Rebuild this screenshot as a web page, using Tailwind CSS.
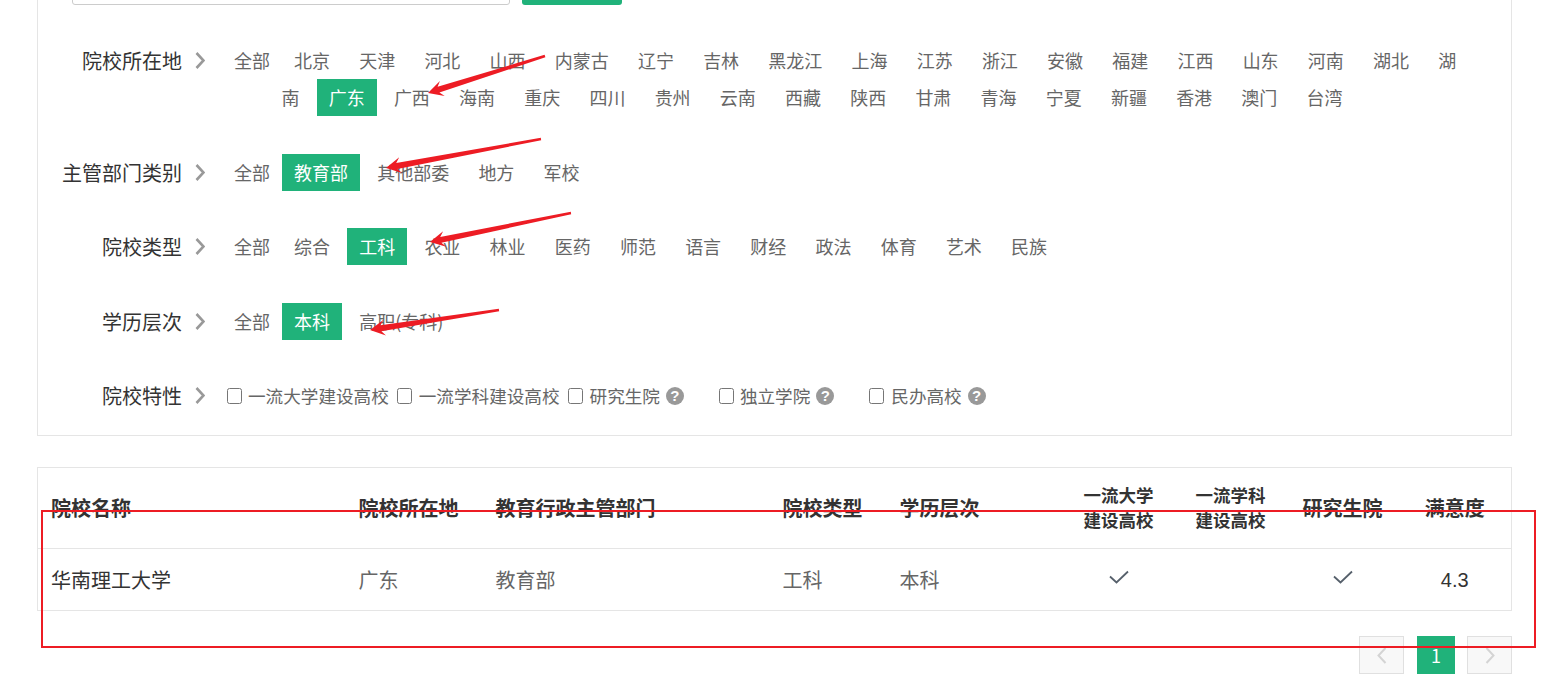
<!DOCTYPE html>
<html lang="zh-CN">
<head>
<meta charset="utf-8">
<script src="https://cdn.jsdelivr.net/npm/@tailwindcss/browser@4"></script>
</head>
<body class="relative h-[690px] w-[1566px] overflow-hidden bg-white font-['Noto_Sans_CJK_SC','Noto_Sans',sans-serif] text-[#666]">
<div class="ml-[37px] w-[1475px]">
  <section class="-mt-[40px] h-[476px] border border-[#e5e5e5] pl-[34px]">
    <div class="flex gap-[12px]">
      <div class="h-[44px] w-[438px] rounded-[3px] border border-[#ccc]"></div>
      <div class="h-[44px] w-[100px] rounded-[3px] bg-[#20b27a]"></div>
    </div>
  </section>
  <section class="-mt-[476px] h-[476px] pt-[81.5px]">
    <div class="flex h-[37px] leading-[37px] text-[18px]">
      <div class="w-[145px] shrink-0 text-right text-[20px] text-[#333] leading-[37px]">院校所在地</div>
      <div class="flex w-[40px] shrink-0 items-center pl-[13px]"><svg width="10" height="17" viewBox="0 0 10 17" fill="none" stroke="#999" stroke-width="2.6"><path d="M1.5 1l7 7.5-7 7.5"/></svg></div>
      <div class="flex"><span class="px-[12px]">全部</span>
        <div class="flex gap-[5.2px]">
          <span class="px-[12px]">北京</span><span class="px-[12px]">天津</span><span class="px-[12px]">河北</span><span class="px-[12px]">山西</span><span class="px-[12px]">内蒙古</span><span class="px-[12px]">辽宁</span><span class="px-[12px]">吉林</span><span class="px-[12px]">黑龙江</span><span class="px-[12px]">上海</span><span class="px-[12px]">江苏</span><span class="px-[12px]">浙江</span><span class="px-[12px]">安徽</span><span class="px-[12px]">福建</span><span class="px-[12px]">江西</span><span class="px-[12px]">山东</span><span class="px-[12px]">河南</span><span class="px-[12px]">湖北</span><span class="px-[12px]">湖</span>
        </div>
      </div>
    </div>
    <div class="flex h-[37px] gap-[5.2px] pl-[232.5px] leading-[37px] text-[18px]">
      <span class="px-[12px]">南</span><span class="bg-[#20b27a] px-[12px] text-white">广东</span><span class="px-[12px]">广西</span><span class="px-[12px]">海南</span><span class="px-[12px]">重庆</span><span class="px-[12px]">四川</span><span class="px-[12px]">贵州</span><span class="px-[12px]">云南</span><span class="px-[12px]">西藏</span><span class="px-[12px]">陕西</span><span class="px-[12px]">甘肃</span><span class="px-[12px]">青海</span><span class="px-[12px]">宁夏</span><span class="px-[12px]">新疆</span><span class="px-[12px]">香港</span><span class="px-[12px]">澳门</span><span class="px-[12px]">台湾</span>
    </div>
    <div class="mt-[38px] flex h-[37px] leading-[37px] text-[18px]">
      <div class="w-[145px] shrink-0 text-right text-[20px] text-[#333]">主管部门类别</div>
      <div class="flex w-[40px] shrink-0 items-center pl-[13px]"><svg width="10" height="17" viewBox="0 0 10 17" fill="none" stroke="#999" stroke-width="2.6"><path d="M1.5 1l7 7.5-7 7.5"/></svg></div>
      <div class="flex"><span class="px-[12px]">全部</span>
        <div class="flex gap-[5.2px]"><span class="bg-[#20b27a] px-[12px] text-white">教育部</span><span class="px-[12px]">其他部委</span><span class="px-[12px]">地方</span><span class="px-[12px]">军校</span></div>
      </div>
    </div>
    <div class="mt-[37.5px] flex h-[37px] leading-[37px] text-[18px]">
      <div class="w-[145px] shrink-0 text-right text-[20px] text-[#333]">院校类型</div>
      <div class="flex w-[40px] shrink-0 items-center pl-[13px]"><svg width="10" height="17" viewBox="0 0 10 17" fill="none" stroke="#999" stroke-width="2.6"><path d="M1.5 1l7 7.5-7 7.5"/></svg></div>
      <div class="flex"><span class="px-[12px]">全部</span>
        <div class="flex gap-[5.2px]"><span class="px-[12px]">综合</span><span class="bg-[#20b27a] px-[12px] text-white">工科</span><span class="px-[12px]">农业</span><span class="px-[12px]">林业</span><span class="px-[12px]">医药</span><span class="px-[12px]">师范</span><span class="px-[12px]">语言</span><span class="px-[12px]">财经</span><span class="px-[12px]">政法</span><span class="px-[12px]">体育</span><span class="px-[12px]">艺术</span><span class="px-[12px]">民族</span></div>
      </div>
    </div>
    <div class="mt-[37.5px] flex h-[37px] leading-[37px] text-[18px]">
      <div class="w-[145px] shrink-0 text-right text-[20px] text-[#333]">学历层次</div>
      <div class="flex w-[40px] shrink-0 items-center pl-[13px]"><svg width="10" height="17" viewBox="0 0 10 17" fill="none" stroke="#999" stroke-width="2.6"><path d="M1.5 1l7 7.5-7 7.5"/></svg></div>
      <div class="flex"><span class="px-[12px]">全部</span>
        <div class="flex gap-[5.2px]"><span class="bg-[#20b27a] px-[12px] text-white">本科</span><span class="px-[12px]">高职(专科)</span></div>
      </div>
    </div>
    <div class="mt-[37.5px] flex h-[37px] items-center leading-[37px] text-[17.6px]">
      <div class="w-[145px] shrink-0 text-right text-[20px] text-[#333]">院校特性</div>
      <div class="flex w-[45px] shrink-0 items-center pl-[13px]"><svg width="10" height="17" viewBox="0 0 10 17" fill="none" stroke="#999" stroke-width="2.6"><path d="M1.5 1l7 7.5-7 7.5"/></svg></div>
      <span class="h-[16px] w-[15px] shrink-0 rounded-[2.5px] border border-[#767676] bg-white"></span>
      <span class="ml-[6px]">一流大学建设高校</span>
      <span class="ml-[8px] h-[16px] w-[15px] shrink-0 rounded-[2.5px] border border-[#767676] bg-white"></span>
      <span class="ml-[7px]">一流学科建设高校</span>
      <span class="ml-[8px] h-[16px] w-[15px] shrink-0 rounded-[2.5px] border border-[#767676] bg-white"></span>
      <span class="ml-[7px]">研究生院</span>
      <span class="ml-[6px] flex h-[18px] w-[18px] shrink-0 items-center justify-center rounded-full bg-[#999] font-['Liberation_Sans',sans-serif] text-[15px] font-bold leading-none text-white">?</span>
      <span class="ml-[35px] h-[16px] w-[15px] shrink-0 rounded-[2.5px] border border-[#767676] bg-white"></span>
      <span class="ml-[6px]">独立学院</span>
      <span class="ml-[6px] flex h-[18px] w-[18px] shrink-0 items-center justify-center rounded-full bg-[#999] font-['Liberation_Sans',sans-serif] text-[15px] font-bold leading-none text-white">?</span>
      <span class="ml-[35px] h-[16px] w-[15px] shrink-0 rounded-[2.5px] border border-[#767676] bg-white"></span>
      <span class="ml-[7px]">民办高校</span>
      <span class="ml-[6px] flex h-[18px] w-[18px] shrink-0 items-center justify-center rounded-full bg-[#999] font-['Liberation_Sans',sans-serif] text-[15px] font-bold leading-none text-white">?</span>
    </div>
  </section>
  <table class="mt-[31px] w-[1475px] table-fixed border-collapse border border-[#e5e5e5]">
    <thead>
      <tr class="h-[81px] border-b border-[#e5e5e5] text-[#333]">
        <th class="w-[308px] pl-[13px] text-left text-[20px] font-bold">院校名称</th>
        <th class="w-[137px] pl-[13px] text-left text-[20px] font-bold">院校所在地</th>
        <th class="w-[287px] pl-[13px] text-left text-[20px] font-bold">教育行政主管部门</th>
        <th class="w-[117px] pl-[13px] text-left text-[20px] font-bold">院校类型</th>
        <th class="w-[176px] pl-[13px] text-left text-[20px] font-bold">学历层次</th>
        <th class="w-[112px] pb-[2px] text-center text-[17.5px] font-bold leading-[25px]">一流大学<br>建设高校</th>
        <th class="w-[112px] pb-[2px] text-center text-[17.5px] font-bold leading-[25px]">一流学科<br>建设高校</th>
        <th class="w-[112px] text-center text-[20px] font-bold">研究生院</th>
        <th class="text-center text-[20px] font-bold">满意度</th>
      </tr>
    </thead>
    <tbody>
      <tr class="h-[62px] text-[20px]">
        <td class="pl-[13px] text-[#333]">华南理工大学</td>
        <td class="pl-[13px]">广东</td>
        <td class="pl-[13px]">教育部</td>
        <td class="pl-[13px]">工科</td>
        <td class="pl-[13px]">本科</td>
        <td class="pb-[6px]"><svg class="mx-auto" width="20" height="14" viewBox="0 0 20 14" fill="none" stroke="#56606b" stroke-width="1.8"><path d="M1 6.5l6.5 6L19 1.5"/></svg></td>
        <td></td>
        <td class="pb-[6px]"><svg class="mx-auto" width="20" height="14" viewBox="0 0 20 14" fill="none" stroke="#56606b" stroke-width="1.8"><path d="M1 6.5l6.5 6L19 1.5"/></svg></td>
        <td class="text-center font-['Liberation_Sans',sans-serif] text-[#333]">4.3</td>
      </tr>
    </tbody>
  </table>
  <nav class="mt-[25px] flex justify-end">
    <div class="flex h-[38px] w-[45px] items-center justify-center border border-[#e0e0e0] bg-[#f8f8f8]"><svg width="10" height="17" viewBox="0 0 10 17" fill="none" stroke="#d4d4d4" stroke-width="2"><path d="M8.5 1l-7 7.5 7 7.5"/></svg></div>
    <div class="ml-[13px] flex h-[38px] w-[38px] items-center justify-center bg-[#20b27a] text-[18px] text-white">1</div>
    <div class="ml-[12px] flex h-[38px] w-[45px] items-center justify-center border border-[#e0e0e0] bg-[#f8f8f8]"><svg width="10" height="17" viewBox="0 0 10 17" fill="none" stroke="#d4d4d4" stroke-width="2"><path d="M1.5 1l7 7.5-7 7.5"/></svg></div>
  </nav>
</div>
<svg class="pointer-events-none absolute left-0 top-0" width="1566" height="690" viewBox="0 0 1566 690" fill="#ed1c24">
  <rect x="42" y="511" width="1493" height="136" fill="none" stroke="#ed1c24" stroke-width="2"/>
  <polygon points="428,93 444.7,96.1 439.4,92.6 545.4,57.2 544.6,54.8 437.6,86.8 439.9,80.9"/>
  <polygon points="386,168 402.2,173.1 397.4,169 541.2,140.2 540.8,137.8 396.2,163 399.2,157.3"/>
  <polygon points="430,242 446.3,246.8 441.4,242.7 571.2,214.2 570.8,211.8 440.2,236.9 443.1,231.2"/>
  <polygon points="370,330 386,335.6 381.4,331.3 499.2,311.2 498.8,308.8 380.4,325.3 383.6,319.8"/>
</svg>
</body>
</html>
